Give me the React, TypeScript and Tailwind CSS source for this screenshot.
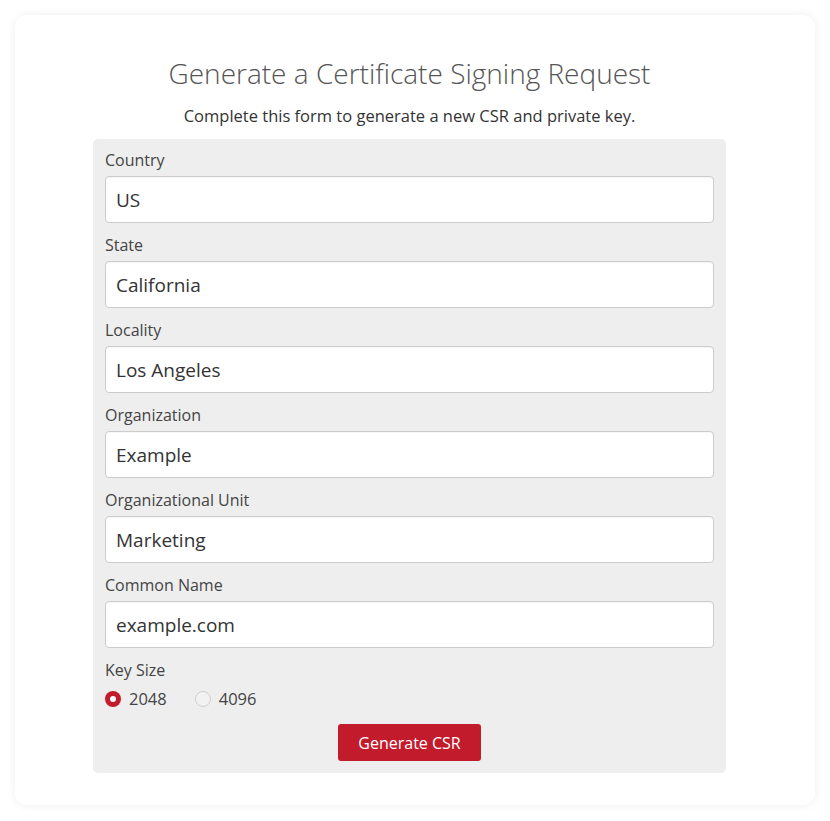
import { useState } from 'react';

const fields = [
  { label: 'Country', value: 'US' },
  { label: 'State', value: 'California' },
  { label: 'Locality', value: 'Los Angeles' },
  { label: 'Organization', value: 'Example' },
  { label: 'Organizational Unit', value: 'Marketing' },
  { label: 'Common Name', value: 'example.com' },
];

const Radio = ({ checked, label, onClick }: { checked: boolean; label: string; onClick: () => void }) => (
  <label className="flex items-center gap-[8px] cursor-pointer" onClick={onClick}>
    <span
      className={
        checked
          ? 'w-4 h-4 rounded-full bg-[#c21b2b] flex items-center justify-center'
          : 'w-4 h-4 rounded-full border border-[#cfcfcf] bg-[#f2f2f2]'
      }
    >
      {checked && <span className="w-[6px] h-[6px] rounded-full bg-white" />}
    </span>
    <span className="text-[16.5px] text-[#444]">{label}</span>
  </label>
);

export default function App() {
  const [values, setValues] = useState(fields.map((f) => f.value));
  const [keySize, setKeySize] = useState('2048');

  return (
    <div className="min-h-[821px] bg-white p-[15px] font-['Open_Sans',sans-serif]">
      <div className="bg-white rounded-[12px] shadow-[0_0_10px_rgba(0,0,0,0.07)] h-[790px] pt-[38px] pl-[78px]">
        <div className="w-[633px]">
          <h1 className="text-center text-[28px] font-light text-[#555] leading-[40px]">
            Generate a Certificate Signing Request
          </h1>
          <p className="text-center text-[16.5px] text-[#333] mt-[11px] leading-[24px]">
            Complete this form to generate a new CSR and private key.
          </p>
          <form className="bg-[#eeeeee] rounded-[5px] mt-[11px] px-[12px] pt-[9px] pb-[12px]">
            {values.map((v, i) => (
              <div key={fields[i].label} className="mb-[10px]">
                <label className="block text-[16px] text-[#444] leading-[24px] mb-[4px]">{fields[i].label}</label>
                <input
                  value={v}
                  onChange={(e) => setValues(values.map((x, j) => (j === i ? e.target.value : x)))}
                  className="block w-full h-[47px] bg-white border border-[#cccccc] rounded-[4px] px-[10px] text-[19px] text-[#333] shadow-[inset_0_1px_1px_rgba(0,0,0,0.04)] outline-none"
                />
              </div>
            ))}
            <div className="text-[16px] text-[#444] leading-[24px]">Key Size</div>
            <div className="flex items-center gap-[28px] mt-[5px] h-[24px]">
              <Radio checked={keySize === '2048'} label="2048" onClick={() => setKeySize('2048')} />
              <Radio checked={keySize === '4096'} label="4096" onClick={() => setKeySize('4096')} />
            </div>
            <div className="flex justify-center mt-[13px]">
              <button
                type="button"
                className="h-[37px] w-[143px] bg-[#c21b2b] text-white text-[16px] rounded-[3px]"
              >
                Generate CSR
              </button>
            </div>
          </form>
        </div>
      </div>
    </div>
  );
}
